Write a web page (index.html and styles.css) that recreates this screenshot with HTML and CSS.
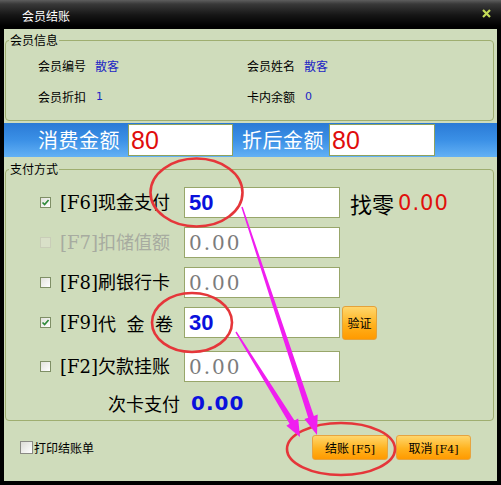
FILE: index.html
```html
<!DOCTYPE html>
<html lang="zh-CN">
<head>
<meta charset="utf-8">
<title>会员结账</title>
<link rel="stylesheet" href="styles.css">
</head>
<body>
<div class="window">
  <div class="titlebar">
    <span class="title">会员结账</span>
    <svg class="close" width="9" height="9" viewBox="0 0 9 9"><path d="M1 1L8 8M8 1L1 8" stroke="#c4dc58" stroke-width="2.2"/></svg>
  </div>
  <div class="client">
    <fieldset class="group info">
      <legend>会员信息</legend>
      <div class="info-grid">
        <div class="field"><span>会员编号</span><span class="val">散客</span></div>
        <div class="field"><span>会员姓名</span><span class="val">散客</span></div>
        <div class="field"><span>会员折扣</span><span class="val num">1</span></div>
        <div class="field"><span>卡内余额</span><span class="val num">0</span></div>
      </div>
    </fieldset>

    <div class="amount-bar">
      <span class="amount-label first">消费金额</span>
      <div class="amount-box first">80</div>
      <span class="amount-label second">折后金额</span>
      <div class="amount-box second">80</div>
    </div>

    <fieldset class="group pay">
      <legend>支付方式</legend>
      <div class="pay-rows">
        <div class="pay-row">
          <span class="check on"><svg width="9" height="9" viewBox="0 0 9 9"><path d="M1.5 4.5L3.6 6.6L7.6 2" fill="none" stroke="#2f8a3a" stroke-width="1.7"/></svg></span>
          <span class="pay-label">[F6]现金支付</span>
          <div class="pay-input"><span class="v-blue">50</span></div>
          <span class="change">找零<span class="change-val">0.00</span></span>
        </div>
        <div class="pay-row disabled">
          <span class="check off"></span>
          <span class="pay-label">[F7]扣储值额</span>
          <div class="pay-input"><span class="v-grey">0.00</span></div>
        </div>
        <div class="pay-row">
          <span class="check"></span>
          <span class="pay-label">[F8]刷银行卡</span>
          <div class="pay-input"><span class="v-grey">0.00</span></div>
        </div>
        <div class="pay-row">
          <span class="check on"><svg width="9" height="9" viewBox="0 0 9 9"><path d="M1.5 4.5L3.6 6.6L7.6 2" fill="none" stroke="#2f8a3a" stroke-width="1.7"/></svg></span>
          <span class="pay-label">[F9]<span class="spread">代 金 卷</span></span>
          <div class="pay-input"><span class="v-blue">30</span></div>
          <button class="verify">验证</button>
        </div>
        <div class="pay-row last">
          <span class="check"></span>
          <span class="pay-label">[F2]欠款挂账</span>
          <div class="pay-input"><span class="v-grey">0.00</span></div>
        </div>
        <div class="sub-row">
          <span class="sub-label">次卡支付</span>
          <span class="sub-val">0.00</span>
        </div>
      </div>
    </fieldset>

    <div class="footer">
      <label class="print"><span class="print-box"></span>打印结账单</label>
      <button class="btn ok">结账 <span class="key">[F5]</span></button>
      <button class="btn cancel">取消 <span class="key">[F4]</span></button>
    </div>
  </div>

  <svg class="annot" width="501" height="485" viewBox="0 0 501 485">
    <g fill="none" stroke="#e5363a" stroke-width="2.6">
      <ellipse cx="196.5" cy="192.5" rx="46" ry="34"/>
      <ellipse cx="192" cy="322.5" rx="40" ry="29.5"/>
      <ellipse cx="341" cy="449" rx="54" ry="26"/>
    </g>
    <g fill="#f01ef0">
      <polygon points="242.7,206.8 313.9,415.9 317.7,414.6 317,435 304.4,419 308.2,417.7 241.3,207.2"/>
      <polygon points="236.6,331.6 294.5,420.6 298.2,418.5 300,437 286.4,425.8 289.5,423.8 235.4,332.4"/>
    </g>
  </svg>
</div>
</body>
</html>
```

FILE: styles.css
```css
* { box-sizing: border-box; }
html, body { margin: 0; padding: 0; }
body {
  width: 501px;
  height: 485px;
  overflow: hidden;
  background: #000;
  font-family: "Noto Sans CJK SC", sans-serif;
  color: #000;
}
.window {
  position: relative;
  width: 501px;
  height: 485px;
  background: #000;
  display: flex;
  flex-direction: column;
}
.titlebar {
  height: 29px;
  flex: none;
  display: flex;
  align-items: center;
  justify-content: space-between;
  padding: 2px 10px 0 22px;
  background: linear-gradient(to bottom, #5e5e5e 0, #393939 4px, #161616 15px, #000 26px);
  color: #fff;
  font-size: 12px;
}
.title { line-height: 16px; }
.close { margin-top: -4px; }
.client {
  flex: 1;
  margin: 0 4px 4px;
  background: #cfdcbb;
  display: flex;
  flex-direction: column;
}
.group {
  margin: 0 3px 0 1px;
  padding: 0 3px;
  border: 1px solid #9fae70;
  border-radius: 4px;
  min-width: 0;
}
.group legend {
  padding: 0 1px;
  font-size: 12px;
  line-height: 14px;
}
.info {
  margin-top: 4px;
  padding-top: 11px;
  padding-bottom: 15px;
}
.info-grid {
  display: grid;
  grid-template-columns: 209px 1fr;
  row-gap: 15px;
  padding-left: 29px;
  font-size: 12px;
  line-height: 16px;
}
.field { display: flex; }
.val { color: #1c26c4; margin-left: 9px; }
.val.num { font-family: "DejaVu Sans", sans-serif; font-size: 11px; margin-left: 10px; }

.amount-bar {
  margin-top: 2px;
  height: 34px;
  flex: none;
  display: flex;
  align-items: center;
  padding-left: 34px;
  background: linear-gradient(to bottom, #2a7ad6, #3b90e6 50%, #63b1f5);
}
.amount-label {
  color: #fff;
  font-size: 20px;
  line-height: 24px;
  letter-spacing: 0.5px;
}
.amount-label.first { width: 90px; }
.amount-label.second { width: 87px; margin-left: 9px; }
.amount-box {
  height: 32px;
  background: #fff;
  border: 1px solid #8fa25e;
  color: #e00c0c;
  font-family: "Liberation Sans", sans-serif;
  font-size: 25px;
  padding-left: 2px;
  display: flex;
  align-items: center;
}
.amount-box.first { width: 105px; }
.amount-box.second { width: 106px; }

.pay {
  margin-top: 5px;
  padding-top: 11px;
  padding-bottom: 6px;
}
.pay-rows {
  display: flex;
  flex-direction: column;
  gap: 9px;
  padding-left: 31px;
}
.pay-row {
  display: flex;
  align-items: center;
  height: 31px;
}
.pay-row.last { margin-top: 4px; }
.check {
  width: 11px;
  height: 11px;
  flex: none;
  margin-right: 9px;
  border: 1px solid #7f8f66;
  background: linear-gradient(135deg, #e2e2dc, #fff);
  display: flex;
  align-items: center;
  justify-content: center;
}
.check.off {
  border-color: #c9cdb8;
  background: #d9e0c8;
}
.pay-label {
  width: 124px;
  flex: none;
  font-family: "DejaVu Serif", "Noto Sans CJK SC", serif;
  font-size: 18px;
  line-height: 22px;
  display: flex;
  white-space: nowrap;
}
.spread {
  display: inline-block;
  width: 75px;
  text-align: justify;
  text-align-last: justify;
  font-family: "Noto Sans CJK SC", sans-serif;
}
.disabled .pay-label { color: #a7aba0; }
.pay-input {
  width: 156px;
  height: 31px;
  flex: none;
  background: #fff;
  border: 1px solid #98a66a;
  display: flex;
  align-items: center;
  padding-left: 4px;
}
.v-blue {
  color: #0a10dc;
  font-family: "Liberation Sans", sans-serif;
  font-weight: bold;
  font-size: 22px;
}
.v-grey {
  color: #7c7c7c;
  font-family: "DejaVu Serif", serif;
  font-size: 20px;
  letter-spacing: 2px;
}
.change {
  margin-left: 10px;
  font-size: 22px;
  line-height: 26px;
  display: flex;
  align-items: center;
}
.change-val {
  margin-left: 4px;
  color: #e0100c;
  font-family: "DejaVu Sans", sans-serif;
  font-size: 21px;
  letter-spacing: 1px;
}
.verify {
  margin-left: 2px;
  width: 35px;
  height: 34px;
  padding: 0;
  border: 1px solid #e4a23a;
  border-radius: 3px;
  background: linear-gradient(to bottom, #ffd66c, #ffb21e 55%, #ff9a00);
  font-family: "Noto Sans CJK SC", sans-serif;
  font-size: 12px;
  color: #000;
}
.sub-row {
  margin-top: 1px;
  height: 22px;
  display: flex;
  align-items: center;
  padding-left: 68px;
}
.sub-label { font-size: 18px; line-height: 22px; }
.sub-val {
  margin-left: 11px;
  color: #0a10dc;
  font-family: "DejaVu Sans", sans-serif;
  font-weight: bold;
  font-size: 20px;
  letter-spacing: 1px;
}

.footer {
  margin-top: 14px;
  height: 25px;
  flex: none;
  display: flex;
  align-items: center;
  padding: 0 26px 0 16px;
}
.print {
  display: flex;
  align-items: center;
  font-size: 12px;
  line-height: 16px;
}
.print-box {
  width: 13px;
  height: 13px;
  margin-right: 1px;
  border: 1px solid #8a8a84;
  background: linear-gradient(135deg, #dcdcd6, #fff);
}
.btn {
  height: 25px;
  padding: 0;
  border: 1px solid #e6a440;
  border-radius: 3px;
  background: linear-gradient(to bottom, #ffd66c, #ffb21e 55%, #ff9a00);
  font-family: "Noto Sans CJK SC", sans-serif;
  font-size: 12px;
  color: #000;
}
.btn .key { font-family: "DejaVu Serif", serif; font-size: 11px; }
.btn.ok { width: 76px; margin-left: auto; }
.btn.cancel { width: 75px; margin-left: 8px; }

.annot {
  position: absolute;
  left: 0;
  top: 0;
  pointer-events: none;
}
```
